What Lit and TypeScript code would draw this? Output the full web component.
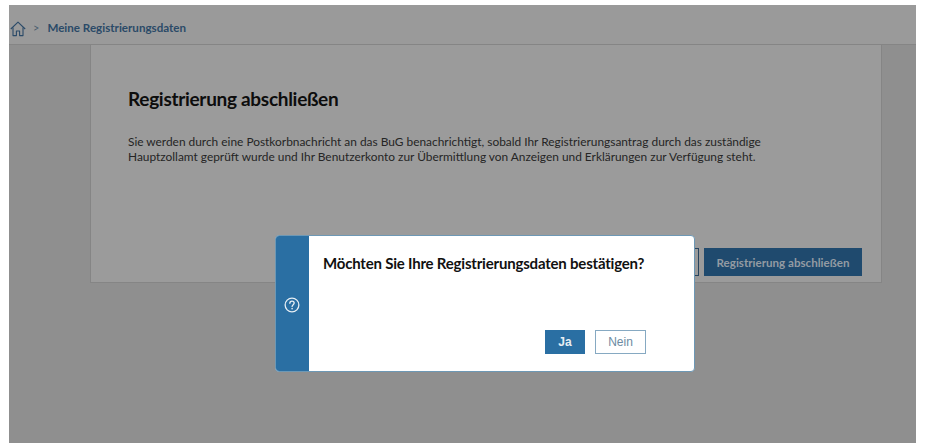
import { LitElement, html, css } from "lit";
import { customElement } from "lit/decorators.js";

@customElement("app-root")
export class AppRoot extends LitElement {
  static styles = css`
    :host { display: block; width: 925px; height: 446px; background: #fff; overflow: hidden; font-family: "Lato", sans-serif; }
    .frame { position: relative; margin: 5px 0 0 9px; width: 907px; height: 438px; background: #8f8f8f; display: flex; flex-direction: column; }
    .top { height: 39px; background: #9a9a9a; border-bottom: 1px solid #858585; display: flex; align-items: center; padding-left: 1px; flex: none; }
    .home { width: 16px; height: 16px; color: #2a4a68; margin-top: 8px; }
    .sep { font-size: 11px; color: #4d5f70; margin: 6px 8px 0 7px; }
    .crumb { font-size: 11.6px; font-weight: 700; color: #2b4a68; margin-top: 6px; }
    .card { margin-left: 81px; width: 734px; height: 237px; background: #9b9b9b; border: solid #858585; border-width: 0 1px 1px; display: flex; flex-direction: column; padding: 0 19px 0 37px; flex: none; }
    h1 { margin: 40px 0 0; font-size: 19px; line-height: 27px; font-weight: 700; color: #0d0d0d; letter-spacing: -0.3px; }
    p { margin: 22px 0 0; font-size: 11.9px; line-height: 15px; color: #252525; width: 660px; }
    .actions { margin-top: auto; margin-bottom: 6px; display: flex; justify-content: flex-end; gap: 5px; }
    .ghost { width: 60px; height: 28px; box-sizing: border-box; border: 1px solid #27445f; }
    .primary { width: 158px; height: 28px; background: #1f4a6e; color: #939ba3; font-size: 11.6px; font-weight: 700; display: flex; align-items: center; justify-content: center; }
    .dialog { position: absolute; left: 266px; top: 230px; width: 420px; height: 137px; box-sizing: border-box; display: flex; background: #fff; border: 1px solid #6d98b5; border-radius: 4px; overflow: hidden; }
    .side { width: 33px; box-sizing: border-box; padding-right: 1px; background: #2a6fa3; display: flex; align-items: center; justify-content: center; flex: none; }
    .side svg { width: 16px; height: 16px; margin-top: 3px; }
    .body { flex: 1; min-width: 0; display: flex; flex-direction: column; padding: 16px 48px 17px 14px; }
    .q { font-size: 15px; line-height: 22px; font-weight: 700; color: #111; white-space: nowrap; letter-spacing: -0.2px; }
    .btns { margin-top: auto; display: flex; justify-content: flex-end; gap: 10px; }
    .btn { width: 40px; height: 24px; box-sizing: border-box; display: flex; align-items: center; justify-content: center; font-family: "Liberation Sans", sans-serif; font-size: 12px; }
    .ja { background: #2a6fa3; color: #e8eef3; font-weight: 700; }
    .nein { width: 51px; border: 1px solid #86a9c2; color: #6d8ba3; }
  `;

  render() {
    return html`
      <div class="frame">
        <div class="top">
          <svg class="home" viewBox="0 0 16 16" fill="none" stroke="currentColor" stroke-width="1.1" stroke-linejoin="round">
            <path d="M0.8 8 L8 1.2 L15.2 8" />
            <path d="M3 6.6 V14.6 H6.4 V10 H9.6 V14.6 H13 V6.6" />
          </svg>
          <span class="sep">&gt;</span>
          <span class="crumb">Meine Registrierungsdaten</span>
        </div>
        <div class="card">
          <h1>Registrierung abschließen</h1>
          <p>Sie werden durch eine Postkorbnachricht an das BuG benachrichtigt, sobald Ihr Registrierungsantrag durch das zuständige Hauptzollamt geprüft wurde und Ihr Benutzerkonto zur Übermittlung von Anzeigen und Erklärungen zur Verfügung steht.</p>
          <div class="actions">
            <div class="ghost"></div>
            <div class="primary">Registrierung abschließen</div>
          </div>
        </div>
        <div class="dialog" role="dialog">
          <div class="side">
            <svg viewBox="0 0 17 17" fill="none" stroke="#e6eef4" stroke-width="1.4" stroke-linecap="round">
              <circle cx="8.5" cy="8.5" r="7.3" />
              <path d="M6.2 6.7 C6.2 5.2 7.3 4.4 8.5 4.4 C9.8 4.4 10.8 5.3 10.8 6.5 C10.8 8 8.6 8.3 8.6 10" />
              <path d="M8.6 12.4 V12.5" stroke-width="1.7" />
            </svg>
          </div>
          <div class="body">
            <div class="q">Möchten Sie Ihre Registrierungsdaten bestätigen?</div>
            <div class="btns">
              <div class="btn ja">Ja</div>
              <div class="btn nein">Nein</div>
            </div>
          </div>
        </div>
      </div>
    `;
  }
}
